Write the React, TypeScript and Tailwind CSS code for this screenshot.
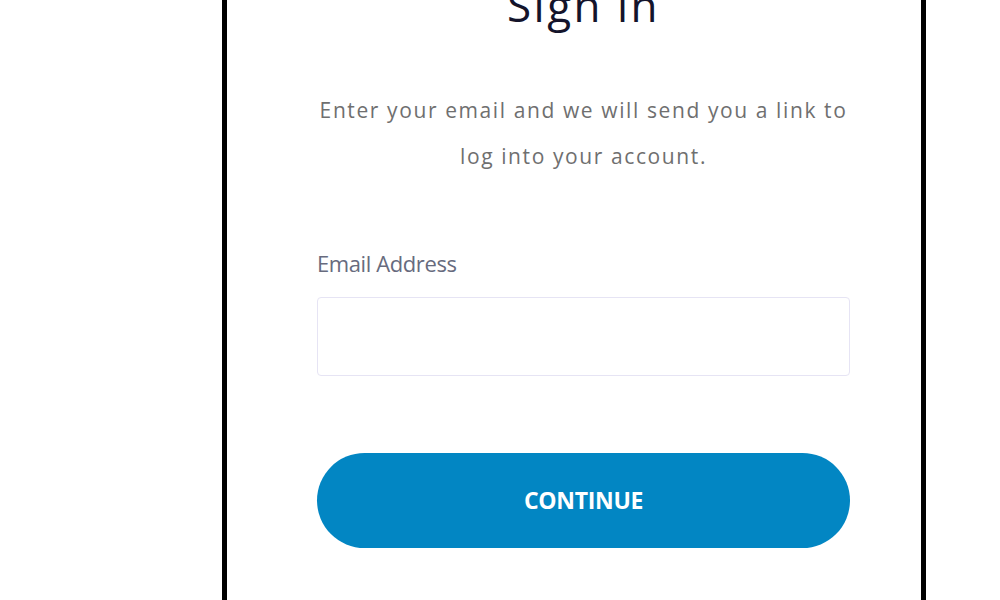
import React from "react";

export default function App() {
  return (
    <div className="min-h-[600px] w-[1000px] overflow-hidden bg-white font-['Open_Sans',sans-serif]">
      <div className="ml-[222px] -mt-[60px] w-[704px] h-[720px] border-[5px] border-black bg-white pl-[90px] pr-[71px] pt-[40px]">
        <h1 className="text-center text-[44px] leading-[40px] font-medium tracking-[2.5px] text-[#14142b]">
          Sign in
        </h1>

        <p className="mt-[62px] text-center text-[21px] leading-[46px] tracking-[1.6px] text-[#6f6f6f]">
          Enter your email and we will send you a link to
          <br />
          log into your account.
        </p>

        <form className="mt-[72px] flex flex-col">
          <label
            htmlFor="email"
            className="text-[22px] leading-[24px] font-medium tracking-[-0.4px] text-[#676b7e]"
          >
            Email Address
          </label>
          <input
            id="email"
            type="email"
            className="mt-[22px] h-[79px] w-full rounded-[4px] border border-[#e6e4f4] px-4 outline-none"
          />
          <button
            type="button"
            className="mt-[77px] h-[95px] w-full rounded-full bg-[#0286c3] text-[23px] font-bold tracking-[-0.3px] text-white"
          >
            CONTINUE
          </button>
        </form>
      </div>
    </div>
  );
}
